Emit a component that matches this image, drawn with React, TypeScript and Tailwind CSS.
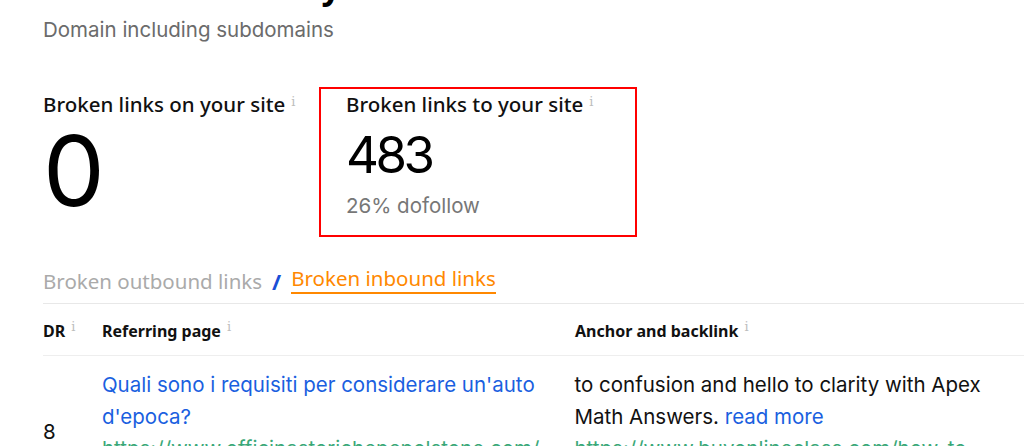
import React from "react";

const Info = () => (
  <sup className="ml-[6px] text-[13px] text-[#bdbdbd] font-normal" style={{ fontFamily: "'DejaVu Serif', 'Liberation Serif', serif" }}>i</sup>
);

export default function App() {
  return (
    <div className="w-[1024px] h-[446px] overflow-hidden bg-white pl-[43px]" style={{ fontFamily: "Inter, 'Liberation Sans', sans-serif" }}>
      <div className="-mt-[34px] h-[40px] text-[34px] font-bold leading-[40px] text-black whitespace-nowrap" style={{ fontFamily: "'Noto Sans', sans-serif" }}>
        Broken links for your website
      </div>
      <div className="mt-[10px] text-[20.5px] leading-[28px] text-[#6b6b6b]">Domain including subdomains</div>

      <div className="mt-[43px] flex">
        <div className="w-[276px] pt-[5px]">
          <div className="text-[20.5px] font-medium leading-[24px] text-[#111]" style={{ fontFamily: "'Noto Sans', sans-serif" }}>
            Broken links on your site<Info />
          </div>
          <div className="mt-[6px] text-[98px] leading-[98px] text-black">0</div>
        </div>
        <div className="w-[318px] h-[150px] border-2 border-[#ff0000] pl-[25px] pt-[3px]">
          <div className="text-[20.5px] font-medium leading-[24px] text-[#111]" style={{ fontFamily: "'Noto Sans', sans-serif" }}>
            Broken links to your site<Info />
          </div>
          <div className="mt-[9px] text-[51px] leading-[60px] tracking-[-3.5px] text-black">483</div>
          <div className="mt-[7px] text-[20.5px] leading-[28px] text-[#777]">26% dofollow</div>
        </div>
      </div>

      <div className="mt-[28px] flex items-end text-[20.5px] leading-[26px] whitespace-nowrap" style={{ fontFamily: "'Noto Sans', sans-serif" }}>
        <span className="text-[#aaaaaa]">Broken outbound links</span>
        <span className="ml-[10px] mr-[10px] text-[22px] text-[#1a4fd6] font-bold">/</span>
        <span className="text-[#ff8800] border-b-2 border-[#ff8800] pb-[1px]">Broken inbound links</span>
      </div>

      <div className="mt-[9px] border-t border-[#e8e8e8]">
        <div className="flex h-[52px] pt-[3px] items-center border-b border-[#eeeeee] text-[16px] font-bold text-[#111]" style={{ fontFamily: "'Noto Sans', sans-serif" }}>
          <div className="w-[59px]">DR<Info /></div>
          <div className="w-[473px]">Referring page<Info /></div>
          <div>Anchor and backlink<Info /></div>
        </div>
        <div className="flex pt-[13px] text-[20.5px] leading-[32px]">
          <div className="w-[59px] pt-[47px] text-[#111]">8</div>
          <div className="w-[473px] pr-[10px]">
            <div className="text-[#1a5fe0]">Quali sono i requisiti per considerare un'auto d'epoca?</div>
            <div className="text-[#3aa878] whitespace-nowrap overflow-hidden">https://www.officinastorichepepolstone.com/</div>
          </div>
          <div className="w-[450px] whitespace-nowrap">
            <div className="text-[#111]">to confusion and hello to clarity with Apex</div>
            <div className="text-[#111]">Math Answers. <span className="text-[#1a5fe0]">read more</span></div>
            <div className="text-[#3aa878]">https://www.buyonlineclass.com/how-to</div>
          </div>
        </div>
      </div>
    </div>
  );
}
